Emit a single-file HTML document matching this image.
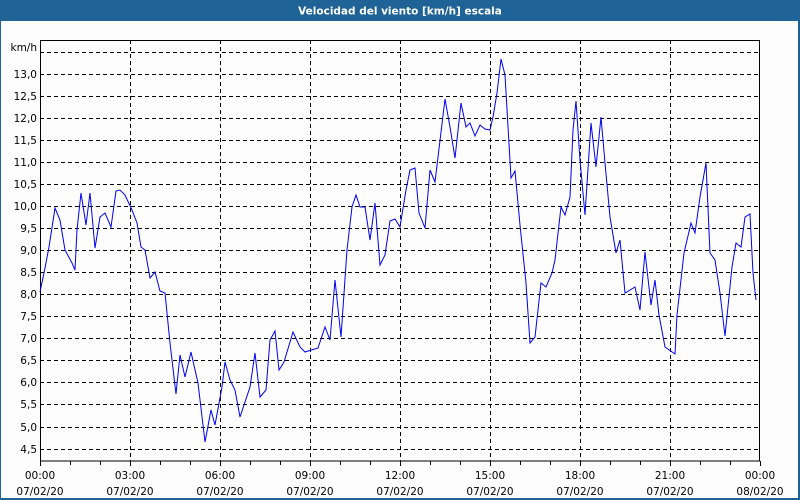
<!DOCTYPE html>
<html><head><meta charset="utf-8"><style>
html,body{margin:0;padding:0;}
body{width:800px;height:500px;overflow:hidden;background:#fcfdfc;font-family:"DejaVu Sans","Liberation Sans",sans-serif;}
</style></head><body>
<svg width="800" height="500" xmlns="http://www.w3.org/2000/svg" style="display:block">
<rect x="0" y="0" width="800" height="500" fill="#fcfdfc"/>
<rect x="0" y="0" width="800" height="21" fill="#1e6296"/>
<rect x="0" y="0" width="1" height="500" fill="#1e6296"/>
<rect x="798" y="0" width="2" height="500" fill="#1e6296"/>
<rect x="0" y="498" width="800" height="2" fill="#1e6296"/>
<text x="400" y="14.5" text-anchor="middle" fill="#fff" font-size="10.5" font-weight="bold" font-family="DejaVu Sans, Liberation Sans, sans-serif">Velocidad del viento [km/h] escala</text>
<g stroke="#000" stroke-width="1" stroke-dasharray="4,3" fill="none">
<path d="M40 52.5H760M40 74.5H760M40 96.5H760M40 118.5H760M40 140.5H760M40 162.5H760M40 184.5H760M40 206.5H760M40 228.5H760M40 250.5H760M40 272.5H760M40 294.5H760M40 316.5H760M40 338.5H760M40 360.5H760M40 382.5H760M40 404.5H760M40 427.5H760M40 449.5H760"/>
<path d="M130.5 40V461M220.5 40V461M310.5 40V461M400.5 40V461M490.5 40V461M580.5 40V461M670.5 40V461"/>
</g>
<rect x="40.5" y="40.5" width="719" height="420.5" fill="none" stroke="#000"/>
<g stroke="#000"><path d="M70.5 461v4M100.5 461v4M130.5 461v5M160.5 461v4M190.5 461v4M220.5 461v5M250.5 461v4M280.5 461v4M310.5 461v5M340.5 461v4M370.5 461v4M400.5 461v5M430.5 461v4M460.5 461v4M490.5 461v5M520.5 461v4M550.5 461v4M580.5 461v5M610.5 461v4M640.5 461v4M670.5 461v5M700.5 461v4M730.5 461v4M760.5 461v5M40.5 461v5"/></g>
<polyline fill="none" stroke="#0000ee" stroke-width="1" points="40,292 45,268 49,247 55,208 60,220 65,250 72,263 75,270 77,230 81,193 86,225 90,193 95,248 100,217 105,213 111,227 116,191 120,190 125,195 132,210 137,223 141,247 145,250 150,278 155,272 160,291 165,293 170,343 176,394 180,355 185,377 191,352 198,383 205,442 211,410 215,425 222,387 225,362 230,380 235,390 240,417 250,387 255,353 260,397 266,390 270,340 275,331 279,370 284,362 293,332 300,347 305,352 318,348 325,327 330,340 335,280 341,337 347,250 352,207 356,195 360,207 365,207 370,240 375,203 380,265 385,255 390,221 395,219 400,227 406,190 410,170 415,168 419,213 425,228 430,170 435,182 445,99 450,127 455,158 461,103 466,127 470,123 475,136 480,125 485,129 490,130 493,117 497,93 501,59 505,75 511,178 515,171 520,225 526,283 530,343 535,337 541,283 546,287 552,273 555,260 561,207 565,215 570,197 573,130 576,101 580,160 585,215 591,123 596,167 601,117 605,163 610,217 616,253 620,240 625,293 635,287 640,310 645,252 651,305 655,280 659,315 665,347 675,354 677,315 684,253 691,223 695,233 700,197 706,163 710,253 715,260 720,293 725,336 732,267 736,243 741,247 745,217 750,214 753,273 756,300"/>
<g font-size="10.5" fill="#000" text-anchor="end">
<text x="37" y="51">km/h</text>
<text x="37" y="78">13,0</text><text x="37" y="100">12,5</text><text x="37" y="122">12,0</text><text x="37" y="144">11,5</text><text x="37" y="166">11,0</text><text x="37" y="188">10,5</text><text x="37" y="210">10,0</text><text x="37" y="232">9,5</text><text x="37" y="254">9,0</text><text x="37" y="276">8,5</text><text x="37" y="298">8,0</text><text x="37" y="320">7,5</text><text x="37" y="342">7,0</text><text x="37" y="364">6,5</text><text x="37" y="386">6,0</text><text x="37" y="408">5,5</text><text x="37" y="431">5,0</text><text x="37" y="453">4,5</text>
</g>
<g font-size="10.5" fill="#000" text-anchor="middle">
<text x="40" y="479">00:00</text><text x="40" y="495">07/02/20</text>
<text x="130" y="479">03:00</text><text x="130" y="495">07/02/20</text>
<text x="220" y="479">06:00</text><text x="220" y="495">07/02/20</text>
<text x="310" y="479">09:00</text><text x="310" y="495">07/02/20</text>
<text x="400" y="479">12:00</text><text x="400" y="495">07/02/20</text>
<text x="490" y="479">15:00</text><text x="490" y="495">07/02/20</text>
<text x="580" y="479">18:00</text><text x="580" y="495">07/02/20</text>
<text x="670" y="479">21:00</text><text x="670" y="495">07/02/20</text>
<text x="760" y="479">00:00</text><text x="760" y="495">08/02/20</text>
</g>
</svg>
</body></html>
